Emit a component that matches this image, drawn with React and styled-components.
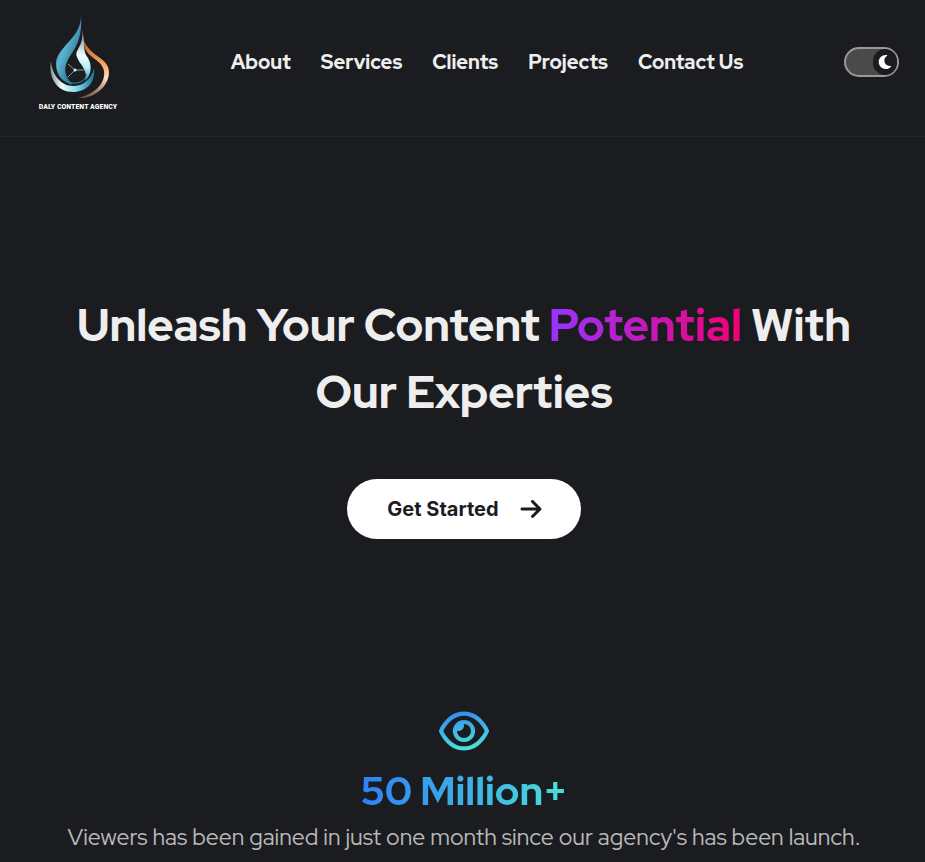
import React, { useState } from "react";
import styled, { createGlobalStyle } from "styled-components";
import { FaMoon } from "react-icons/fa";
import { FaArrowRight, FaRegEye } from "react-icons/fa6";

const GlobalStyle = createGlobalStyle`
  *, *::before, *::after { box-sizing: border-box; }
  body {
    margin: 0;
    background: #1b1c1f;
    color: #eeeeee;
    font-family: "Red Hat Display", Inter, sans-serif;
  }
`;

const Header = styled.header`
  display: flex;
  align-items: center;
  justify-content: space-between;
  height: 137px;
  padding: 0 26px 12px;
  border-bottom: 1px solid #27282b;
`;

const Brand = styled.a`
  display: flex;
  flex-direction: column;
  align-items: center;
  width: 104px;
  padding-top: 5px;
  color: #ffffff;
  text-decoration: none;
`;

const BrandName = styled.span`
  font: 700 8px/14px "Roboto Condensed", "Liberation Sans Narrow", "Liberation Sans", sans-serif;
  white-space: nowrap;
`;

const Nav = styled.nav`
  display: flex;
  gap: 30px;
`;

const NavLink = styled.a`
  color: #eeeeee;
  font-size: 20px;
  font-weight: 800;
  line-height: 28px;
  text-decoration: none;
  white-space: nowrap;
`;

const Toggle = styled.button`
  display: flex;
  justify-content: ${({ $dark }) => ($dark ? "flex-end" : "flex-start")};
  width: 55px;
  height: 30px;
  padding: 0;
  border: 2px solid #999999;
  border-radius: 15px;
  background: #4a4a4a;
  cursor: pointer;
`;

const Knob = styled.span`
  display: flex;
  align-items: center;
  justify-content: center;
  width: 24px;
  height: 26px;
  border-radius: 13px;
  background: #1b1c1f;
  color: #ffffff;
  font-size: 14px;
`;

const Main = styled.main`
  padding-left: 3px;
`;

const Hero = styled.section`
  display: flex;
  flex-direction: column;
  align-items: center;
  gap: 53px;
  padding: 155px 40px 0;
`;

const Title = styled.h1`
  max-width: 820px;
  margin: 0;
  font-size: 45px;
  font-weight: 800;
  line-height: 67px;
  text-align: center;
`;

const Highlight = styled.span`
  background: linear-gradient(90deg, #9733ff, #f20075);
  background-clip: text;
  color: transparent;
`;

const StartButton = styled.button`
  display: flex;
  align-items: center;
  gap: 20px;
  height: 60px;
  padding: 0 38px 0 40px;
  border: 0;
  border-radius: 30px;
  background: #ffffff;
  color: #1b1c1f;
  font: 700 20px/28px Inter, sans-serif;
  cursor: pointer;

  svg {
    width: 24px;
    height: 24px;
  }
`;

const Stats = styled.section`
  display: flex;
  flex-direction: column;
  align-items: center;
  padding: 167px 20px 0;
  text-align: center;
`;

const EyeIcon = styled(FaRegEye)`
  width: 50px;
  height: 50px;
`;

const Figure = styled.h2`
  margin: 5px 0 0;
  background: linear-gradient(90deg, #2f80f5, #4adfd8);
  background-clip: text;
  color: transparent;
  font-size: 40px;
  font-weight: 800;
  line-height: 60px;
`;

const Caption = styled.p`
  margin: 0;
  color: #b8b9ba;
  font-size: 23px;
  line-height: 32px;
`;

const links = ["About", "Services", "Clients", "Projects", "Contact Us"];

function Logo() {
  return (
    <svg width="64" height="84" viewBox="0 0 64 84" aria-hidden="true">
      <defs>
        <linearGradient id="wave" x1="0" y1="0" x2="1" y2="1">
          <stop offset="0" stopColor="#1d5468" />
          <stop offset=".4" stopColor="#5cb4d0" />
          <stop offset=".7" stopColor="#2c7c98" />
          <stop offset="1" stopColor="#1d6680" />
        </linearGradient>
        <linearGradient id="shine" x1="0" y1="0" x2="0" y2="1">
          <stop offset="0" stopColor="#5d7d88" />
          <stop offset=".5" stopColor="#f2fcff" />
          <stop offset=".75" stopColor="#b4ebf6" />
          <stop offset="1" stopColor="#318eaa" />
        </linearGradient>
        <linearGradient id="bowl">
          <stop offset="0" stopColor="#7f9299" />
          <stop offset=".25" stopColor="#f0fbfd" />
          <stop offset=".6" stopColor="#7dd9ee" />
          <stop offset="1" stopColor="#147590" />
        </linearGradient>
        <linearGradient id="flame" x1="0" y1="0" x2="0" y2="1">
          <stop offset="0" stopColor="#b85a1c" />
          <stop offset=".4" stopColor="#f7a65c" />
          <stop offset=".65" stopColor="#ffdfbd" />
          <stop offset="1" stopColor="#70513a" />
        </linearGradient>
      </defs>
      <path fill="url(#wave)" d="M35 0C35 23 10 31 10 48C10 60 18 67 27 69C20 62 17 54 21 46C25 36 37 28 35 0Z" />
      <path fill="url(#shine)" d="M36 14C38 32 28 33 31 41C33 48 43 54 39 65C46 58 46 49 42 42C36 34 40 29 36 14Z" />
      <path fill="url(#flame)" d="M38 25C37 42 56 42 58 55C60 68 47 79 32 82C49 83 63 70 63 56C63 42 45 41 38 25Z" />
      <path fill="url(#bowl)" d="M5 45C2 63 12 76 27 76C40 76 50 67 48 52C45 64 37 70 27 70C15 70 6 59 5 45Z" />
      <path fill="none" stroke="#318eaa" d="M22 66C31 69 39 66 41 58" />
      <path fill="none" stroke="#8b9698" d="M29 54L22 48M30 54H38M28 55L22 61" />
      <circle cx="29" cy="54" r="1.5" fill="#d7f7ff" />
    </svg>
  );
}

export default function App() {
  const [dark, setDark] = useState(true);

  return (
    <>
      <GlobalStyle />
      <Header>
        <Brand href="#">
          <Logo />
          <BrandName>DALY CONTENT AGENCY</BrandName>
        </Brand>
        <Nav aria-label="Main">
          {links.map((label) => (
            <NavLink key={label} href={`#${label.toLowerCase().replace(" ", "-")}`}>
              {label}
            </NavLink>
          ))}
        </Nav>
        <Toggle
          type="button"
          role="switch"
          aria-label="Dark mode"
          aria-checked={dark}
          $dark={dark}
          onClick={() => setDark(!dark)}
        >
          <Knob>
            <FaMoon />
          </Knob>
        </Toggle>
      </Header>
      <Main>
        <Hero>
          <Title>
            Unleash Your Content <Highlight>Potential</Highlight> With Our Experties
          </Title>
          <StartButton type="button">
            Get Started
            <FaArrowRight />
          </StartButton>
        </Hero>
        <Stats>
          <svg width="0" height="0" aria-hidden="true">
            <linearGradient id="eye-gradient" x1="0" y1="0" x2="0.2" y2="1">
              <stop offset="0" stopColor="#3185f5" />
              <stop offset="1" stopColor="#4adfd8" />
            </linearGradient>
          </svg>
          <EyeIcon fill="url(#eye-gradient)" />
          <Figure>50 Million+</Figure>
          <Caption>Viewers has been gained in just one month since our agency's has been launch.</Caption>
        </Stats>
      </Main>
    </>
  );
}
